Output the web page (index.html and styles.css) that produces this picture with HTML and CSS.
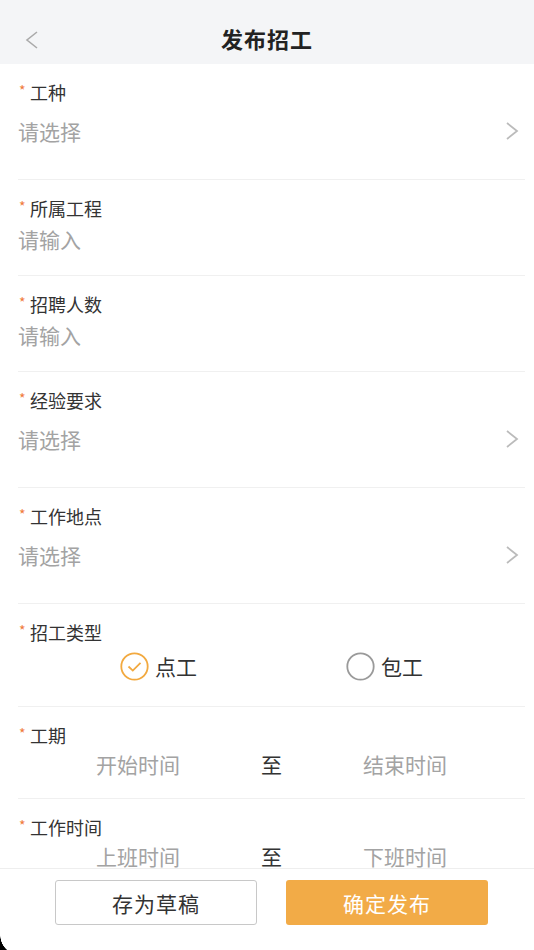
FILE: index.html
```html
<!DOCTYPE html>
<html lang="zh-CN">
<head>
    <meta charset="UTF-8">
    <meta name="viewport" content="width=device-width, initial-scale=1.0">
    <title>发布招工</title>
    <link rel="stylesheet" href="styles.css">
</head>
<body>
    <div class="page">
        <header class="nav-bar">
            <span class="nav-back">
                <svg width="16" height="20" viewBox="0 0 16 20"><path d="M14 2 L4 10 L14 18" fill="none" stroke="#aaa" stroke-width="1.6"/></svg>
            </span>
            <h1 class="nav-title">发布招工</h1>
        </header>

        <main class="form-body">
            <div class="field field-select">
                <div class="field-label"><span class="star">*</span>工种</div>
                <div class="field-value select">
                    <span class="placeholder">请选择</span>
                    <svg class="arrow" width="14" height="20" viewBox="0 0 14 20"><path d="M2 2 L12 10 L2 18" fill="none" stroke="#bbb" stroke-width="1.8"/></svg>
                </div>
            </div>

            <div class="field field-input">
                <div class="field-label"><span class="star">*</span>所属工程</div>
                <div class="field-value input"><span class="placeholder">请输入</span></div>
            </div>

            <div class="field field-input">
                <div class="field-label"><span class="star">*</span>招聘人数</div>
                <div class="field-value input"><span class="placeholder">请输入</span></div>
            </div>

            <div class="field field-select">
                <div class="field-label"><span class="star">*</span>经验要求</div>
                <div class="field-value select">
                    <span class="placeholder">请选择</span>
                    <svg class="arrow" width="14" height="20" viewBox="0 0 14 20"><path d="M2 2 L12 10 L2 18" fill="none" stroke="#bbb" stroke-width="1.8"/></svg>
                </div>
            </div>

            <div class="field field-select">
                <div class="field-label"><span class="star">*</span>工作地点</div>
                <div class="field-value select">
                    <span class="placeholder">请选择</span>
                    <svg class="arrow" width="14" height="20" viewBox="0 0 14 20"><path d="M2 2 L12 10 L2 18" fill="none" stroke="#bbb" stroke-width="1.8"/></svg>
                </div>
            </div>

            <div class="field field-radio">
                <div class="field-label"><span class="star">*</span>招工类型</div>
                <div class="radio-group">
                    <label class="radio">
                        <svg width="29" height="29" viewBox="0 0 29 29"><circle cx="14.5" cy="14.5" r="13.2" fill="none" stroke="#f2a93f" stroke-width="1.8"/><path d="M8.5 14.5 L12.8 18.6 L20.5 10.8" fill="none" stroke="#f2a93f" stroke-width="1.8"/></svg>
                        点工
                    </label>
                    <label class="radio">
                        <svg width="29" height="29" viewBox="0 0 29 29"><circle cx="14.5" cy="14.5" r="13.2" fill="none" stroke="#9a9a9a" stroke-width="1.8"/></svg>
                        包工
                    </label>
                </div>
            </div>

            <div class="field field-range">
                <div class="field-label"><span class="star">*</span>工期</div>
                <div class="range">
                    <span class="placeholder">开始时间</span>
                    <span class="range-sep">至</span>
                    <span class="placeholder">结束时间</span>
                </div>
            </div>

            <div class="field field-range">
                <div class="field-label"><span class="star">*</span>工作时间</div>
                <div class="range">
                    <span class="placeholder">上班时间</span>
                    <span class="range-sep">至</span>
                    <span class="placeholder">下班时间</span>
                </div>
            </div>
        </main>

        <footer class="action-bar">
            <button class="btn btn-draft">存为草稿</button>
            <button class="btn btn-submit">确定发布</button>
        </footer>

        <div class="screen-corner"></div>
    </div>
</body>
</html>
```

FILE: styles.css
```css
* {
    box-sizing: border-box;
}

body {
    margin: 0;
    background-color: #fff;
    font-family: "Noto Sans CJK SC", "Noto Sans", sans-serif;
    color: #333;
}

.page {
    position: relative;
    height: 950px;
    display: flex;
    flex-direction: column;
    overflow: hidden;
}

.nav-bar {
    height: 64px;
    flex-shrink: 0;
    background-color: #f4f5f7;
    display: flex;
    align-items: center;
    justify-content: center;
    position: relative;
}

.nav-back {
    position: absolute;
    left: 23px;
    top: 30px;
    line-height: 0;
}

.nav-title {
    margin: 12px 0 0;
    font-size: 22px;
    font-weight: bold;
    color: #222;
    letter-spacing: 1px;
}

.form-body {
    flex: 1;
    overflow: hidden;
}

.field {
    margin: 0 9px 0 18px;
    padding: 16px 0 20px;
    border-bottom: 1px solid #f0f0f0;
}

.field-label {
    height: 24px;
    line-height: 24px;
    font-size: 18px;
    color: #333;
}

.star {
    display: inline-block;
    width: 12px;
    padding-left: 1px;
    font-size: 14px;
    color: #f07a3a;
    vertical-align: top;
    line-height: 20px;
}

.placeholder {
    color: #a3a3a3;
    font-size: 21px;
}

.field-value {
    display: flex;
    align-items: center;
    justify-content: space-between;
}

/* select rows: taller, with an arrow */
.field-select {
    padding-bottom: 31px;
}

.field-value.select {
    height: 44px;
    padding-top: 10px;
    padding-right: 6px;
}

.field-input {
    padding-bottom: 22px;
}

.field-value.input {
    height: 28px;
    margin-top: 5px;
}

.field-radio {
    padding-bottom: 20px;
}

.radio-group {
    height: 40px;
    margin-top: 2px;
    display: flex;
    align-items: center;
    justify-content: center;
    gap: 149px;
}

.radio {
    display: flex;
    align-items: center;
    gap: 6px;
    font-size: 21px;
    color: #333;
}

.radio svg {
    display: block;
}

.field-range {
    padding-bottom: 20px;
}

.range {
    height: 28px;
    margin-top: 3px;
    display: flex;
    align-items: center;
    justify-content: center;
    gap: 81px;
}

.range-sep {
    font-size: 21px;
    color: #333;
}

.action-bar {
    height: 82px;
    flex-shrink: 0;
    border-top: 1px solid #eee;
    background-color: #fff;
    display: flex;
    justify-content: center;
    gap: 29px;
    padding-top: 11px;
    padding-left: 9px;
}

.btn {
    width: 202px;
    height: 45px;
    font-family: inherit;
    font-size: 21px;
    border-radius: 3px;
    letter-spacing: 1px;
    cursor: pointer;
}

.btn-draft {
    background-color: #fff;
    border: 1px solid #c8c8c8;
    color: #333;
}

.btn-submit {
    background-color: #f2ab47;
    border: none;
    color: #fff;
}

.screen-corner {
    position: absolute;
    left: 0;
    bottom: 0;
    width: 20px;
    height: 15px;
    background: radial-gradient(circle 20px at 20px 0, transparent 19.5px, #000 20px);
}
```
